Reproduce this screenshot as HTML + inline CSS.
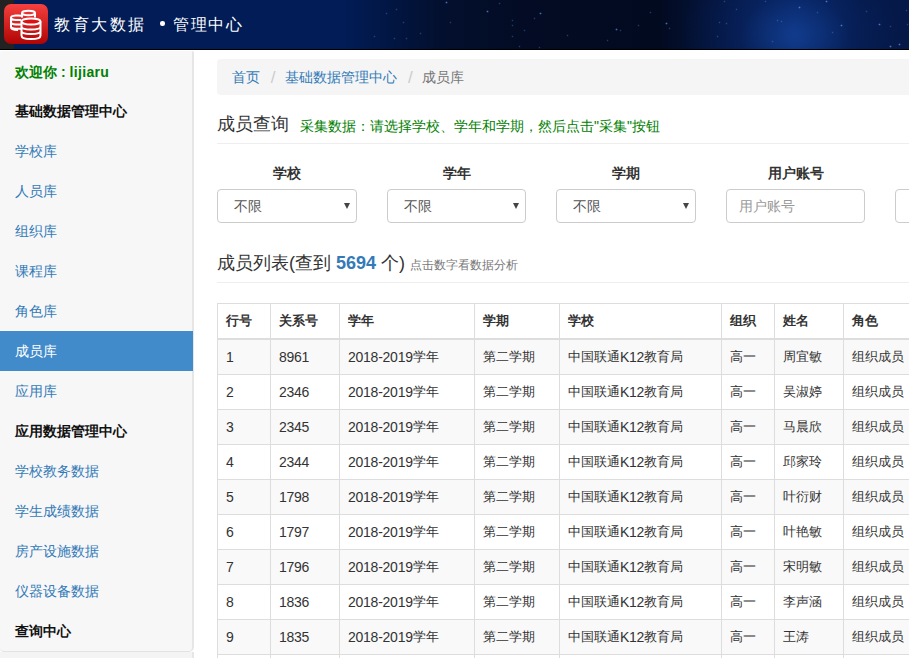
<!DOCTYPE html>
<html><head><meta charset="utf-8">
<style>
*{box-sizing:border-box;margin:0;padding:0}
html,body{width:909px;height:658px;overflow:hidden;background:#fff}
body{font-family:"Liberation Sans",sans-serif;font-size:14px;color:#333;line-height:20px;position:relative}
i,b,span{font-style:normal}
.hdr{position:absolute;left:0;top:0;width:909px;height:50px;background:#011c56;border-bottom:1px solid #000;overflow:hidden}
.hdr .strip{position:absolute;left:0;top:0;width:14px;height:49px;background:#222}
.hdr .sky{position:absolute;left:0;top:0;width:909px;height:49px;
 background:
 radial-gradient(ellipse 55px 40px at 795px 36px, rgba(30,90,190,.35), rgba(20,60,150,0) 100%),
 radial-gradient(ellipse 110px 70px at 790px 30px, rgba(15,60,150,.3), rgba(20,60,150,0) 100%),
 linear-gradient(90deg, rgba(2,12,38,0) 0px, rgba(2,12,38,0) 345px, rgba(3,14,42,.9) 440px, rgba(3,12,36,1) 520px, rgba(2,10,32,1) 660px, rgba(5,24,70,1) 730px, rgba(8,36,98,1) 795px, rgba(5,26,76,1) 860px, rgba(5,24,70,1) 909px);}
.stars{position:absolute;left:0;top:0;width:1px;height:1px;border-radius:50%;box-shadow:446px 2px 1px 0.3px rgba(120,170,255,0.9),396px 9px 1px 0.2px rgba(100,150,240,0.5),386px 13px 1px 0.2px rgba(100,150,240,0.5),403px 22px 1px 0.2px rgba(100,150,240,0.5),450px 22px 1px 0.2px rgba(100,150,240,0.5),487px 11px 1px 0.3px rgba(120,170,255,0.9),420px 33px 1px 0.2px rgba(100,150,240,0.5),394px 38px 1px 0.2px rgba(100,150,240,0.5),406px 38px 1px 0.2px rgba(100,150,240,0.5),374px 36px 1px 0.2px rgba(100,150,240,0.5),512px 20px 1px 0.2px rgba(100,150,240,0.5),512px 25px 1px 0.2px rgba(100,150,240,0.5),524px 30px 1px 0.2px rgba(100,150,240,0.5),512px 36px 1px 0.2px rgba(100,150,240,0.5),519px 46px 1px 0.2px rgba(100,150,240,0.5),499px 3px 1px 0.2px rgba(100,150,240,0.5),540px 13px 1px 0.3px rgba(120,170,255,0.9),534px 18px 1px 0.2px rgba(100,150,240,0.5),567px 35px 1px 0.2px rgba(100,150,240,0.5),650px 12px 1px 0.2px rgba(100,150,240,0.5),666px 23px 1px 0.3px rgba(120,170,255,0.9),616px 29px 1px 0.3px rgba(120,170,255,0.9),620px 30px 1px 0.2px rgba(100,150,240,0.5),638px 25px 1px 0.2px rgba(100,150,240,0.5),669px 28px 1px 0.2px rgba(100,150,240,0.5),607px 40px 1px 0.2px rgba(100,150,240,0.5),539px 47px 1px 0.2px rgba(100,150,240,0.5),719px 22px 1px 0.2px rgba(100,150,240,0.5),726px 23px 1px 0.2px rgba(100,150,240,0.5),717px 36px 1px 0.2px rgba(100,150,240,0.5),724px 1px 1px 0.2px rgba(100,150,240,0.5),826px 1px 1px 0.3px rgba(120,170,255,0.9),799px 7px 1px 0.3px rgba(120,170,255,0.9),765px 1px 1px 0.2px rgba(100,150,240,0.5),736px 9px 1px 0.2px rgba(100,150,240,0.5),777px 20px 1px 0.2px rgba(100,150,240,0.5),781px 21px 1px 0.2px rgba(100,150,240,0.5),841px 25px 1px 0.3px rgba(120,170,255,0.9),879px 24px 1px 0.3px rgba(120,170,255,0.9),890px 26px 1px 0.2px rgba(100,150,240,0.5),906px 10px 1px 0.2px rgba(100,150,240,0.5),899px 44px 1px 0.3px rgba(120,170,255,0.9),890px 46px 1px 0.3px rgba(120,170,255,0.9),866px 11px 1px 0.2px rgba(100,150,240,0.5),832px 32px 1px 0.2px rgba(100,150,240,0.5),772px 41px 1px 0.2px rgba(100,150,240,0.5),817px 12px 1px 0.2px rgba(100,150,240,0.5),907px 24px 1px 0.2px rgba(100,150,240,0.5)}
.logo{position:absolute;left:4px;top:4px;width:44px;height:40px;border-radius:7px;background:linear-gradient(#f5403f,#b00404)}
.logo svg{position:absolute;left:0;top:0}
.ttl{position:absolute;top:13px;color:#fff;font-family:"Liberation Serif",serif;font-size:16px;letter-spacing:1.6px;line-height:24px;white-space:nowrap}
.dot{position:absolute;left:160px;top:21px;width:4.5px;height:4.5px;border-radius:50%;background:#fff}
.side{position:absolute;left:0;top:51px;width:194px;height:601px;background:#f7f7f7;border-right:2px solid #e6e6e6;border-bottom:1px solid #e3e3e3;border-radius:2px 2px 5px 4px}
.side2{position:absolute;left:0;top:652px;width:194px;height:10px;background:#f4f4f4;border-right:2px solid #e6e6e6}
.side div{position:absolute;left:15px;height:40px;line-height:40px;font-size:14px}
.side .g{color:#008000;font-weight:bold}
.side .b{color:#111;font-weight:bold}
.side .l{color:#337ab7}
.side .act{left:0;width:193px;background:#428bca;color:#fff;padding-left:15px}
.bc{position:absolute;left:217px;top:59px;width:720px;height:36px;background:#f5f5f5;border-radius:4px;padding:8px 15px;color:#777;line-height:20px}
.bc a{color:#337ab7;text-decoration:none}
.bc .sep{color:#ccc;padding:0 5px 0 6px;font-size:17px;vertical-align:top;line-height:20px;position:relative;top:1px}
.ph{position:absolute;left:217px;top:109px;font-size:18px;line-height:30px;color:#333;white-space:nowrap}
.ph small{font-size:14px;color:#008000;margin-left:11px;position:relative;top:1px}
.line{position:absolute;left:217px;width:720px;height:1px;background:#eee}
.lab{position:absolute;top:163px;width:140px;text-align:center;font-weight:bold;color:#333}
.sel{position:absolute;top:189px;width:140px;height:34px;border:1px solid #ccc;border-radius:4px;background:#fff;padding:6px 16px;color:#555;line-height:20px}
.sel .arr{position:absolute;right:6px;top:13px;width:0;height:0;border-left:3px solid transparent;border-right:3px solid transparent;border-top:6px solid #444}
.sel.ph2{color:#999;padding-left:12px}
.lh{position:absolute;left:217px;top:248px;font-size:18px;line-height:30px;white-space:nowrap;color:#333}
.lh .n{color:#337ab7;font-weight:bold}
.lh small{font-size:12px;color:#777}
.vl{position:absolute;top:303px;width:1px;height:400px;background:#ddd}
.hl{position:absolute;left:217px;width:700px;height:1px;background:#ddd}
.hl2{position:absolute;left:217px;width:700px;height:2px;background:#ddd}
.stripe{position:absolute;left:217px;width:700px;height:34px;background:#f9f9f9}
.th{position:absolute;height:34px;line-height:34px;font-size:13px;font-weight:bold;color:#333;white-space:nowrap}
.td{position:absolute;height:34px;line-height:34px;font-size:13px;color:#333;white-space:nowrap}
.td em{font-style:normal;font-size:14px;letter-spacing:-.25px;line-height:0;position:relative;top:1px}
</style></head><body>
<div class="hdr"><div class="sky"></div><i class="stars"></i><div class="strip"></div><div class="logo">
<svg width="44" height="40" viewBox="0 0 44 40" fill="none" stroke="#fff" stroke-width="2">
<!-- back top stack -->
<ellipse cx="24.5" cy="9" rx="6.5" ry="2.3"/>
<path d="M18 9v4.5 M31 9v4.5"/>
<!-- left stack -->
<path d="M17.5 11.8 c-2-.6-10.5-.6-10.5 2 v9.5 c0 2 3 2.8 7 2.8 M7 13.8 c0 2 4 2.4 10 2.2 M7 18.3 c0 2 4 2.4 10 2.2 M7 22.6 c0 2 4 2.4 10 2.2"/>
<!-- front stack -->
<ellipse cx="27" cy="17.5" rx="9.5" ry="3" fill="#d11"/>
<path d="M17.5 17.5v14c0 2.3 4.3 3.6 9.5 3.6s9.5-1.3 9.5-3.6v-14 M17.5 22.5c0 2 4.3 3 9.5 3s9.5-1 9.5-3 M17.5 27c0 2 4.3 3 9.5 3s9.5-1 9.5-3"/>
</svg></div>
<div class="ttl" style="left:54px;letter-spacing:2.5px">教育大数据</div><i class="dot"></i><div class="ttl" style="left:173px;letter-spacing:1.5px">管理中心</div></div>

<div class="side">
<div class="g" style="top:1px">欢迎你 : <span style="letter-spacing:.35px">lijiaru</span></div>
<div class="b" style="top:40px">基础数据管理中心</div>
<div class="l" style="top:80px">学校库</div>
<div class="l" style="top:120px">人员库</div>
<div class="l" style="top:160px">组织库</div>
<div class="l" style="top:200px">课程库</div>
<div class="l" style="top:240px">角色库</div>
<div class="act" style="top:280px">成员库</div>
<div class="l" style="top:320px">应用库</div>
<div class="b" style="top:360px">应用数据管理中心</div>
<div class="l" style="top:400px">学校教务数据</div>
<div class="l" style="top:440px">学生成绩数据</div>
<div class="l" style="top:480px">房产设施数据</div>
<div class="l" style="top:520px">仪器设备数据</div>
<div class="b" style="top:560px">查询中心</div>
</div>
<div class="side2"></div>

<div class="bc"><a>首页</a><span class="sep"> / </span><a>基础数据管理中心</a><span class="sep"> / </span>成员库</div>

<div class="ph">成员查询<small>采集数据：请选择学校、学年和学期，然后点击"采集"按钮</small></div>
<div class="line" style="top:143px"></div>

<div class="lab" style="left:217px">学校</div>
<div class="sel" style="left:217px">不限<i class="arr"></i></div>
<div class="lab" style="left:387px">学年</div>
<div class="sel" style="left:387px;width:139px">不限<i class="arr"></i></div>
<div class="lab" style="left:556px">学期</div>
<div class="sel" style="left:556px">不限<i class="arr"></i></div>
<div class="lab" style="left:726px">用户账号</div>
<div class="sel ph2" style="left:726px;width:139px">用户账号</div>
<div class="sel" style="left:895px"></div>

<div class="lh">成员列表(查到 <span class="n">5694</span> 个) <small>点击数字看数据分析</small></div>
<div class="line" style="top:282px"></div>
<div class="tbl">
<i class="stripe" style="top:340px"></i>
<i class="stripe" style="top:410px"></i>
<i class="stripe" style="top:480px"></i>
<i class="stripe" style="top:550px"></i>
<i class="stripe" style="top:620px"></i>
<i class="vl" style="left:217px"></i>
<i class="vl" style="left:270px"></i>
<i class="vl" style="left:339px"></i>
<i class="vl" style="left:474px"></i>
<i class="vl" style="left:559px"></i>
<i class="vl" style="left:721px"></i>
<i class="vl" style="left:774px"></i>
<i class="vl" style="left:843px"></i>
<i class="hl" style="top:303px"></i>
<i class="hl2" style="top:338px"></i>
<i class="hl" style="top:374px"></i>
<i class="hl" style="top:409px"></i>
<i class="hl" style="top:444px"></i>
<i class="hl" style="top:479px"></i>
<i class="hl" style="top:514px"></i>
<i class="hl" style="top:549px"></i>
<i class="hl" style="top:584px"></i>
<i class="hl" style="top:619px"></i>
<i class="hl" style="top:654px"></i>
<i class="hl" style="top:689px"></i>
<b class="th" style="left:226px;top:304px">行号</b>
<b class="th" style="left:279px;top:304px">关系号</b>
<b class="th" style="left:348px;top:304px">学年</b>
<b class="th" style="left:483px;top:304px">学期</b>
<b class="th" style="left:568px;top:304px">学校</b>
<b class="th" style="left:730px;top:304px">组织</b>
<b class="th" style="left:783px;top:304px">姓名</b>
<b class="th" style="left:852px;top:304px">角色</b>
<span class="td" style="left:226px;top:340px"><em>1</em></span>
<span class="td" style="left:279px;top:340px"><em>8961</em></span>
<span class="td" style="left:348px;top:340px"><em>2018-2019</em>学年</span>
<span class="td" style="left:483px;top:340px">第二学期</span>
<span class="td" style="left:568px;top:340px">中国联通<em>K12</em>教育局</span>
<span class="td" style="left:730px;top:340px">高一</span>
<span class="td" style="left:783px;top:340px">周宜敏</span>
<span class="td" style="left:852px;top:340px">组织成员</span>
<span class="td" style="left:226px;top:375px"><em>2</em></span>
<span class="td" style="left:279px;top:375px"><em>2346</em></span>
<span class="td" style="left:348px;top:375px"><em>2018-2019</em>学年</span>
<span class="td" style="left:483px;top:375px">第二学期</span>
<span class="td" style="left:568px;top:375px">中国联通<em>K12</em>教育局</span>
<span class="td" style="left:730px;top:375px">高一</span>
<span class="td" style="left:783px;top:375px">吴淑婷</span>
<span class="td" style="left:852px;top:375px">组织成员</span>
<span class="td" style="left:226px;top:410px"><em>3</em></span>
<span class="td" style="left:279px;top:410px"><em>2345</em></span>
<span class="td" style="left:348px;top:410px"><em>2018-2019</em>学年</span>
<span class="td" style="left:483px;top:410px">第二学期</span>
<span class="td" style="left:568px;top:410px">中国联通<em>K12</em>教育局</span>
<span class="td" style="left:730px;top:410px">高一</span>
<span class="td" style="left:783px;top:410px">马晨欣</span>
<span class="td" style="left:852px;top:410px">组织成员</span>
<span class="td" style="left:226px;top:445px"><em>4</em></span>
<span class="td" style="left:279px;top:445px"><em>2344</em></span>
<span class="td" style="left:348px;top:445px"><em>2018-2019</em>学年</span>
<span class="td" style="left:483px;top:445px">第二学期</span>
<span class="td" style="left:568px;top:445px">中国联通<em>K12</em>教育局</span>
<span class="td" style="left:730px;top:445px">高一</span>
<span class="td" style="left:783px;top:445px">邱家玲</span>
<span class="td" style="left:852px;top:445px">组织成员</span>
<span class="td" style="left:226px;top:480px"><em>5</em></span>
<span class="td" style="left:279px;top:480px"><em>1798</em></span>
<span class="td" style="left:348px;top:480px"><em>2018-2019</em>学年</span>
<span class="td" style="left:483px;top:480px">第二学期</span>
<span class="td" style="left:568px;top:480px">中国联通<em>K12</em>教育局</span>
<span class="td" style="left:730px;top:480px">高一</span>
<span class="td" style="left:783px;top:480px">叶衍财</span>
<span class="td" style="left:852px;top:480px">组织成员</span>
<span class="td" style="left:226px;top:515px"><em>6</em></span>
<span class="td" style="left:279px;top:515px"><em>1797</em></span>
<span class="td" style="left:348px;top:515px"><em>2018-2019</em>学年</span>
<span class="td" style="left:483px;top:515px">第二学期</span>
<span class="td" style="left:568px;top:515px">中国联通<em>K12</em>教育局</span>
<span class="td" style="left:730px;top:515px">高一</span>
<span class="td" style="left:783px;top:515px">叶艳敏</span>
<span class="td" style="left:852px;top:515px">组织成员</span>
<span class="td" style="left:226px;top:550px"><em>7</em></span>
<span class="td" style="left:279px;top:550px"><em>1796</em></span>
<span class="td" style="left:348px;top:550px"><em>2018-2019</em>学年</span>
<span class="td" style="left:483px;top:550px">第二学期</span>
<span class="td" style="left:568px;top:550px">中国联通<em>K12</em>教育局</span>
<span class="td" style="left:730px;top:550px">高一</span>
<span class="td" style="left:783px;top:550px">宋明敏</span>
<span class="td" style="left:852px;top:550px">组织成员</span>
<span class="td" style="left:226px;top:585px"><em>8</em></span>
<span class="td" style="left:279px;top:585px"><em>1836</em></span>
<span class="td" style="left:348px;top:585px"><em>2018-2019</em>学年</span>
<span class="td" style="left:483px;top:585px">第二学期</span>
<span class="td" style="left:568px;top:585px">中国联通<em>K12</em>教育局</span>
<span class="td" style="left:730px;top:585px">高一</span>
<span class="td" style="left:783px;top:585px">李声涵</span>
<span class="td" style="left:852px;top:585px">组织成员</span>
<span class="td" style="left:226px;top:620px"><em>9</em></span>
<span class="td" style="left:279px;top:620px"><em>1835</em></span>
<span class="td" style="left:348px;top:620px"><em>2018-2019</em>学年</span>
<span class="td" style="left:483px;top:620px">第二学期</span>
<span class="td" style="left:568px;top:620px">中国联通<em>K12</em>教育局</span>
<span class="td" style="left:730px;top:620px">高一</span>
<span class="td" style="left:783px;top:620px">王涛</span>
<span class="td" style="left:852px;top:620px">组织成员</span>
<span class="td" style="left:226px;top:655px"><em>10</em></span>
<span class="td" style="left:279px;top:655px"><em>1834</em></span>
<span class="td" style="left:348px;top:655px"><em>2018-2019</em>学年</span>
<span class="td" style="left:483px;top:655px">第二学期</span>
<span class="td" style="left:568px;top:655px">中国联通<em>K12</em>教育局</span>
<span class="td" style="left:730px;top:655px">高一</span>
<span class="td" style="left:783px;top:655px">张三</span>
<span class="td" style="left:852px;top:655px">组织成员</span>
</div></body></html>
